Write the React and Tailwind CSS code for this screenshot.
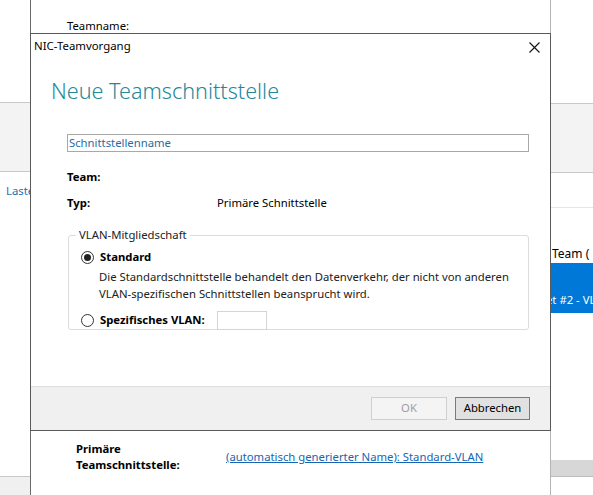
import React from 'react';

const font = { fontFamily: '"Noto Sans", "Open Sans", sans-serif' };

function Radio({ checked }) {
  return (
    <span className="flex h-[13px] w-[13px] shrink-0 items-center justify-center rounded-full border border-[#333] bg-white">
      {checked && <span className="h-[7px] w-[7px] rounded-full bg-[#222]" />}
    </span>
  );
}

function TeamDialog() {
  return (
    <div className="absolute left-[30px] top-[33px] flex h-[398px] w-[521px] flex-col border border-[#5a5a5a] bg-white">
      {/* title bar */}
      <div className="flex h-[24px] items-center justify-between pl-[3px] pr-[10px]">
        <span className="text-[11.4px] text-black">NIC-Teamvorgang</span>
        <svg width="11" height="11" viewBox="0 0 11 11" className="mt-[2px]">
          <path d="M0.5 0.5 L10.5 10.5 M10.5 0.5 L0.5 10.5" stroke="#111" strokeWidth="1.1" />
        </svg>
      </div>

      <div className="flex-1 pl-[20px] pr-[21px]">
        <h1 className="mt-[18px] text-[21.6px] font-light leading-[30px] text-[#24889b]">
          Neue Teamschnittstelle
        </h1>

        <div className="ml-[16px] mt-[28px] flex flex-col text-[11.3px]">
          <div className="flex h-[18px] items-center border border-[#a8a8a8] px-[1px] text-[#1f6ea6]">
            Schnittstellenname
          </div>

          <div className="mt-[17px] flex h-[17px] items-center font-bold text-black">Team:</div>
          <div className="mt-[9px] flex h-[17px] items-center text-black">
            <span className="w-[150px] font-bold">Typ:</span>
            <span>Primäre Schnittstelle</span>
          </div>

          {/* VLAN group */}
          <fieldset className="ml-[1px] mt-[15px] h-[103px] rounded-[3px] border border-[#dcdcdc] pl-[12px] pr-[10px]">
            <legend className="-ml-[5px] px-[3px] leading-[16px] text-[#222]">VLAN-Mitgliedschaft</legend>
            <div className="mt-[6px] flex h-[17px] items-center gap-[6px] font-bold text-black">
              <Radio checked />
              <span>Standard</span>
            </div>
            <p className="ml-[18px] mt-[2px] whitespace-nowrap leading-[17px] text-[#222]">
              Die Standardschnittstelle behandelt den Datenverkehr, der nicht von anderen
              <br />
              VLAN-spezifischen Schnittstellen beansprucht wird.
            </p>
            <div className="mt-[9px] flex h-[19px] items-center font-bold text-black">
              <span className="flex w-[136px] items-center gap-[6px]">
                <Radio />
                <span>Spezifisches VLAN:</span>
              </span>
              <span className="h-[19px] w-[50px] border border-[#d4d4d4] bg-white" />
            </div>
          </fieldset>
        </div>
      </div>

      {/* footer */}
      <div className="flex h-[44px] items-center justify-end gap-[8px] border-t border-[#dedede] bg-[#f0f0f0] pr-[20px]">
        <button className="h-[23px] w-[76px] border border-[#cfcfcf] bg-[#f4f4f4] text-[11.3px] text-[#a0a0a0]">OK</button>
        <button className="h-[23px] w-[75px] border border-[#7a7a7a] bg-[#e1e1e1] text-[11.3px] text-black">Abbrechen</button>
      </div>
    </div>
  );
}

export default function App() {
  return (
    <div className="relative flex h-[495px] w-[593px] overflow-hidden bg-white text-[11.3px]" style={font}>
      {/* left strip of the underlying window */}
      <div className="flex w-[30px] shrink-0 flex-col">
        <div className="h-[103px] border-b border-[#c8c8c8] bg-white" />
        <div className="h-[69px] border-b border-[#c8c8c8] bg-[#f3f3f3]" />
        <div className="h-[305px] overflow-hidden whitespace-nowrap border-b border-[#c8c8c8] bg-white pl-[6px] pt-[11px] text-[#1a6fb5]">
          Laste
        </div>
        <div className="flex-1 bg-[#f0f0f0]" />
      </div>

      {/* properties window behind the dialog */}
      <div className="flex w-[521px] shrink-0 flex-col border-l border-r border-l-[#6a6a6a] border-r-[#b4b4b4] bg-white">
        <div className="ml-[36px] mt-[18px] text-black">Teamname:</div>
        <div className="mb-[22px] ml-[45px] mt-auto flex items-center">
          <div className="w-[150px] font-bold leading-[16px] text-black">
            Primäre
            <br />
            Teamschnittstelle:
          </div>
          <a className="mt-[1px] text-[#1565b3] underline">(automatisch generierter Name): Standard-VLAN</a>
        </div>
      </div>

      {/* right strip */}
      <div className="flex min-w-0 flex-1 flex-col overflow-hidden">
        <div className="h-[104px] border-b border-[#c8c8c8] bg-white" />
        <div className="h-[69px] border-b border-[#c8c8c8] bg-[#f3f3f3]" />
        <div className="h-[35px] border-b border-[#e6e6e6] bg-white" />
        <div className="flex h-[55px] items-end whitespace-nowrap pl-[1px] text-[12px] leading-[18px] text-black">Team (</div>
        <div className="flex h-[50px] items-center overflow-hidden whitespace-nowrap bg-[#0078d7] pt-[24px] text-white">
          <span className="-ml-[5px]">et #2 - VLAN</span>
        </div>
        <div className="h-[147px] bg-white" />
        <div className="h-[17px] border-b border-[#bdbdbd] bg-[#d7d7d7]" />
        <div className="flex-1 bg-white" />
      </div>

      <TeamDialog />
    </div>
  );
}
